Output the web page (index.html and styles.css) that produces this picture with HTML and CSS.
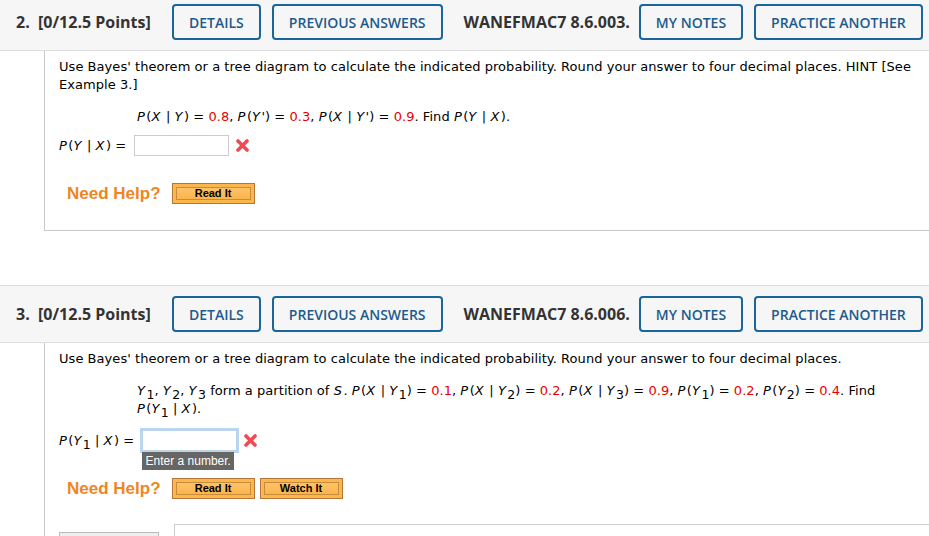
FILE: index.html
```html
<!DOCTYPE html>
<html lang="en">

<head>
    <meta charset="UTF-8">
    <meta name="viewport" content="width=device-width, initial-scale=1.0">
    <title>Assignment</title>
    <link rel="stylesheet" href="styles.css">
</head>

<body>

    <div class="page">

        <div class="question">
            <div class="qhead">
                <span class="qnum">2.&nbsp; [0/12.5 Points]</span>
                <button class="qbtn">DETAILS</button>
                <button class="qbtn">PREVIOUS ANSWERS</button>
                <span class="qcode">WANEFMAC7 8.6.003.</span>
                <button class="qbtn">MY NOTES</button>
                <button class="qbtn">PRACTICE ANOTHER</button>
            </div>
            <div class="qbody">
                <p class="prompt">Use Bayes' theorem or a tree diagram to calculate the indicated probability. Round your answer to four decimal places. HINT [See Example 3.]</p>
                <p class="given"><i>P</i>(<i>X</i> | <i>Y</i>) = <span class="val">0.8</span>, <i>P</i>(<i>Y</i>') = <span class="val">0.3</span>, <i>P</i>(<i>X</i> | <i>Y</i>') = <span class="val">0.9</span>. Find <i>P</i>(<i>Y</i> | <i>X</i>).</p>
                <div class="answer">
                    <span class="alabel"><i>P</i>(<i>Y</i> | <i>X</i>) =</span>
                    <input type="text" class="ans">
                    <svg class="wrong" width="13" height="13" viewBox="0 0 13 13"><path d="M2 2 L11 11 M11 2 L2 11" stroke="#f04b55" stroke-width="3.6" stroke-linecap="round"/></svg>
                </div>
                <div class="help">
                    <span class="needhelp">Need Help?</span>
                    <button class="helpbtn"><span>Read It</span></button>
                </div>
            </div>
        </div>

        <div class="question">
            <div class="qhead">
                <span class="qnum">3.&nbsp; [0/12.5 Points]</span>
                <button class="qbtn">DETAILS</button>
                <button class="qbtn">PREVIOUS ANSWERS</button>
                <span class="qcode">WANEFMAC7 8.6.006.</span>
                <button class="qbtn">MY NOTES</button>
                <button class="qbtn">PRACTICE ANOTHER</button>
            </div>
            <div class="qbody">
                <p class="prompt">Use Bayes' theorem or a tree diagram to calculate the indicated probability. Round your answer to four decimal places.</p>
                <p class="given narrow"><i>Y</i><sub>1</sub>, <i>Y</i><sub>2</sub>, <i>Y</i><sub>3</sub> form a partition of <i>S</i>. <i>P</i>(<i>X</i> | <i>Y</i><sub>1</sub>) = <span class="val">0.1</span>, <i>P</i>(<i>X</i> | <i>Y</i><sub>2</sub>) = <span class="val">0.2</span>, <i>P</i>(<i>X</i> | <i>Y</i><sub>3</sub>) = <span class="val">0.9</span>, <i>P</i>(<i>Y</i><sub>1</sub>) = <span class="val">0.2</span>, <i>P</i>(<i>Y</i><sub>2</sub>) = <span class="val">0.4</span>. Find <span class="nw"><i>P</i>(<i>Y</i><sub>1</sub> | <i>X</i>).</span></p>
                <div class="answer">
                    <span class="alabel"><i>P</i>(<i>Y</i><sub>1</sub> | <i>X</i>) =</span>
                    <span class="field">
                        <input type="text" class="ans focus">
                        <span class="tip">Enter a number.</span>
                    </span>
                    <svg class="wrong" width="13" height="13" viewBox="0 0 13 13"><path d="M2 2 L11 11 M11 2 L2 11" stroke="#f04b55" stroke-width="3.6" stroke-linecap="round"/></svg>
                </div>
                <div class="help">
                    <span class="needhelp">Need Help?</span>
                    <button class="helpbtn"><span>Read It</span></button>
                    <button class="helpbtn"><span>Watch It</span></button>
                </div>
                <div class="extras">
                    <div class="savebtn"></div>
                    <div class="notes"></div>
                </div>
            </div>
        </div>

    </div>

</body>

</html>
```

FILE: styles.css
```css
*{
    margin: 0;
    padding: 0;
    box-sizing: border-box;
}
body{
    background: #FFFFFF;
    overflow: hidden;
    color: #000;
}
.page{
    margin-top: -7px;
}
.question{
    margin-bottom: 54px;
}
.qhead{
    display: flex;
    align-items: center;
    gap: 11px;
    height: 58px;
    padding: 0 0 0 16px;
    background: #F6F6F6;
    border-top: 1px solid #DDDDDD;
    border-bottom: 1px solid #DDDDDD;
    font-family: "Open Sans", sans-serif;
    white-space: nowrap;
}
.qhead > *{
    flex-shrink: 0;
}
.qnum{
    width: 145px;
    font-weight: 700;
    font-size: 16px;
    color: #333333;
}
.qcode{
    font-weight: 700;
    font-size: 16px;
    color: #333333;
    margin: 0 -2px 0 10px;
}
.qbtn{
    height: 36px;
    padding: 0 15px;
    border: 2px solid #1A659A;
    border-radius: 4px;
    background: #F6F6F6;
    color: #1D5B8C;
    font-family: "Open Sans", sans-serif;
    font-weight: 600;
    font-size: 14px;
    white-space: nowrap;
}
.qbody{
    margin-left: 44px;
    padding: 7px 14px 26px 14px;
    border-left: 1px solid #C8C8C8;
    border-bottom: 1px solid #C8C8C8;
    font-family: "DejaVu Sans", Verdana, sans-serif;
    font-size: 13px;
    line-height: 18px;
    letter-spacing: 0.05px;
}
.qbody i{
    padding-right: 1.4px;
}
.given{
    margin: 14px 0 0 78px;
}
.given.narrow{
    max-width: 750px;
    margin-bottom: 12px;
}
.nw{
    white-space: nowrap;
}
.val{
    color: #E80000;
}
sub{
    font-size: 12.5px;
    line-height: 0;
    vertical-align: -4px;
}
.answer{
    display: flex;
    align-items: center;
    gap: 8px;
    margin-top: 9px;
    height: 21px;
}
.ans{
    width: 95px;
    height: 21px;
    border: 1px solid #CCCCCC;
    background: #FFFFFF;
}
.ans.focus{
    border-color: #BFD3E6;
    box-shadow: 0 0 0 2px #B5D6F5;
}
.field{
    position: relative;
    display: inline-block;
    height: 21px;
}
.tip{
    position: absolute;
    top: 22px;
    left: 0;
    width: 92px;
    height: 18px;
    line-height: 18px;
    background: #666666;
    color: #FFFFFF;
    font-family: "Liberation Sans", Arial, sans-serif;
    font-size: 12px;
    letter-spacing: 0;
    text-align: center;
}
.wrong{
    margin-left: -1px;
}
.help{
    display: flex;
    align-items: center;
    gap: 5px;
    margin: 27px 0 0 8px;
}
.needhelp{
    font-family: "Liberation Sans", Arial, sans-serif;
    font-weight: 700;
    font-size: 17px;
    letter-spacing: 0;
    color: #F0851F;
    margin-right: 6px;
}
.helpbtn{
    width: 83px;
    height: 21px;
    padding: 3px;
    border: 1px solid #B5763A;
    background: #FBB64C;
    font-family: "Liberation Sans", Arial, sans-serif;
    font-weight: 700;
    font-size: 11px;
    color: #000;
}
.helpbtn span{
    display: block;
    height: 13px;
    line-height: 11px;
    border: 1px solid #C98B3C;
    background: linear-gradient(#FDC36A, #FBB44B);
}
.extras{
    display: flex;
    align-items: flex-start;
    gap: 15px;
    margin-top: 25px;
    height: 40px;
}
.savebtn{
    width: 100px;
    height: 20px;
    margin-top: 8px;
    border: 1px solid #BBBBBB;
    background: #EEEEEE;
}
.notes{
    flex: 1;
    height: 40px;
    border: 1px solid #CCCCCC;
    border-right: none;
    margin-right: -14px;
}
```
